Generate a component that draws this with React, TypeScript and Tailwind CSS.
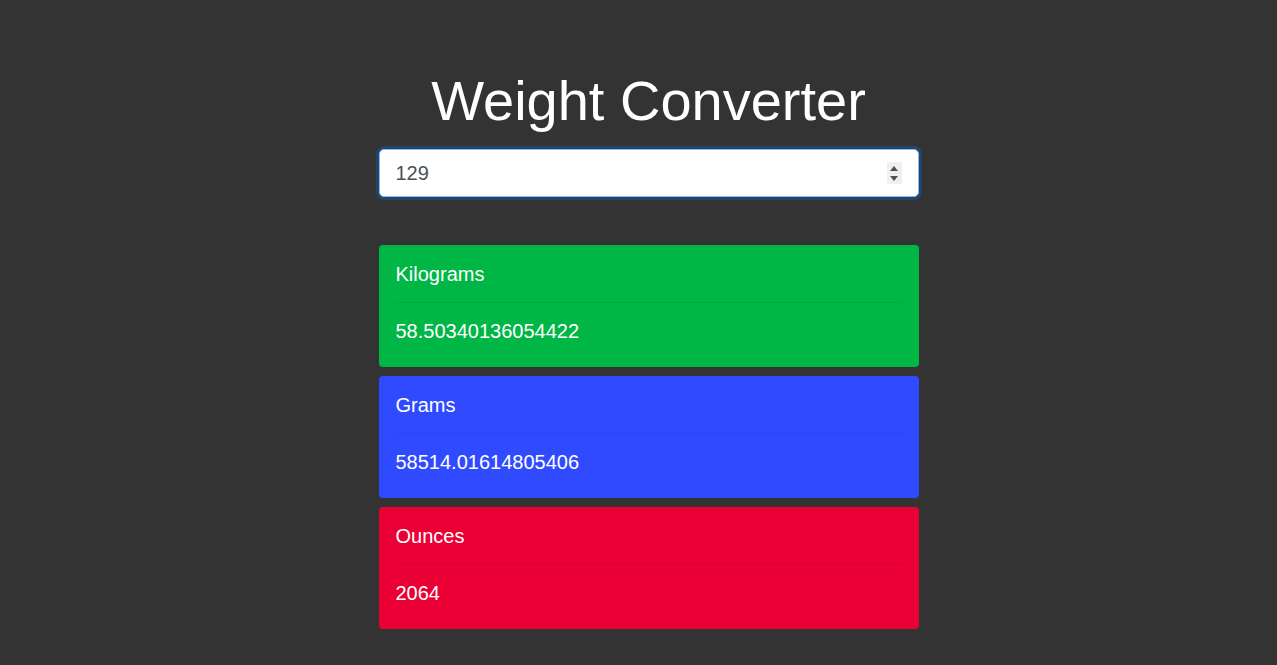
import React from "react";

const cards = [
  { label: "Kilograms", value: "58.50340136054422", bg: "bg-[#00b746]" },
  { label: "Grams", value: "58514.01614805406", bg: "bg-[#304bff]" },
  { label: "Ounces", value: "2064", bg: "bg-[#eb0036]" },
];

export default function App() {
  return (
    <div
      className="min-h-[665px] w-full bg-[#333333] pl-[20px] text-white"
      style={{ fontFamily: '"Liberation Sans", Arial, sans-serif' }}
    >
      <div className="mx-auto w-[540px] pt-[67px]">
        <h1 className="mb-[15px] text-center text-[56px] font-normal leading-[67px] text-white">
          Weight Converter
        </h1>
        <div className="flex h-[48px] items-center rounded-[5px] border border-[#80bdff] bg-white pl-4 pr-4 shadow-[0_0_0_3px_rgba(0,123,255,0.25)]">
          <span className="flex-1 text-[20px] leading-[30px] text-[#495057]">129</span>
          <div className="flex h-[22px] w-[15px] flex-col items-center justify-center gap-[5px] bg-[#f0f0f0]">
            <svg width="8" height="5" viewBox="0 0 8 5">
              <polygon points="4,0 8,5 0,5" fill="#505050" />
            </svg>
            <svg width="8" height="5" viewBox="0 0 8 5">
              <polygon points="0,0 8,0 4,5" fill="#505050" />
            </svg>
          </div>
        </div>
        <div className="mt-[48px] flex flex-col gap-[9px]">
          {cards.map((c) => (
            <div
              key={c.label}
              className={`h-[122px] rounded-[4px] ${c.bg} px-[17px] pt-[17px] text-[20px] leading-[24px] text-white`}
            >
              <div>{c.label}</div>
              <div className="my-[16px] h-px bg-[rgba(0,0,0,0.08)]" />
              <div>{c.value}</div>
            </div>
          ))}
        </div>
      </div>
    </div>
  );
}
